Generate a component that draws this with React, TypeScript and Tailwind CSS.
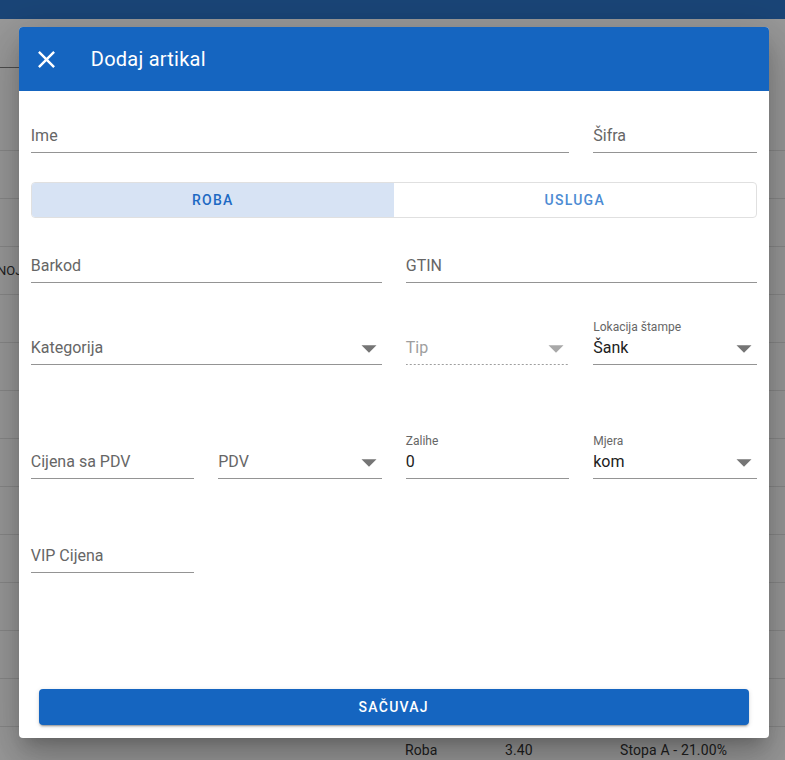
import { ReactNode } from "react";

function Arrow({ disabled = false }: { disabled?: boolean }) {
  return (
    <svg width="16" height="8" viewBox="0 0 16 8" className={disabled ? "fill-[#a8a8a8]" : "fill-[#757575]"} aria-hidden="true">
      <path d="M0.5 0.2H15.5L8 7.8Z" />
    </svg>
  );
}

interface FieldProps {
  label: string;
  value?: string;
  select?: boolean;
  disabled?: boolean;
  className?: string;
}

function Field({ label, value, select = false, disabled = false, className = "" }: FieldProps) {
  // disabled underline is a 2px on / 2px off dash, a dashed border comes out too sparse
  const line = disabled
    ? "bg-[linear-gradient(to_right,#9e9e9e_2px,transparent_2px)] bg-[length:4px_1px] bg-bottom bg-repeat-x"
    : "border-b border-[#949494]";
  return (
    <div className={`relative ${className}`}>
      {value && (
        <div className="absolute left-0 -top-[12px] text-[12px] leading-[16px] text-[#666666]">{label}</div>
      )}
      <div className={`flex h-[34px] items-center justify-between text-[16px] ${line}`}>
        {value ? (
          <span className="text-[#212121]">{value}</span>
        ) : (
          <span className={disabled ? "text-[#9e9e9e]" : "text-[#666666]"}>{label}</span>
        )}
        {select && (
          <span className="mr-[5px] mt-[2px] flex">
            <Arrow disabled={disabled} />
          </span>
        )}
      </div>
    </div>
  );
}

function Row({ children }: { children?: ReactNode }) {
  return <div className="h-12 border-b border-[#e0e0e0] text-[14px] tracking-[0.125px] text-[#212121]">{children}</div>;
}

export default function App() {
  return (
    <div className="relative h-[760px] overflow-hidden bg-white font-['Roboto',sans-serif]">
      {/* Page behind the dialog */}
      <div className="h-[19px] bg-[#1565c0]" />
      <div className="h-[49px] w-[300px] border-b border-[#757575]" />
      <div className="h-[35px]" />
      <div className="h-[48px] border-b border-[#e0e0e0]" />
      <Row />
      <Row />
      <Row>
        <div className="-ml-[3px] flex h-full items-center text-[13px] tracking-normal">NOJ</div>
      </Row>
      <Row />
      <Row />
      <Row />
      <Row />
      <Row />
      <Row />
      <Row />
      <Row />
      <Row />
      <Row>
        <div className="flex h-full items-center pl-[405px]">
          <span className="w-[100px]">Roba</span>
          <span className="w-[115px]">3.40</span>
          <span>Stopa A - 21.00%</span>
        </div>
      </Row>

      <div className="absolute inset-0 bg-[#212121]/46" />

      {/* Dialog */}
      <div className="absolute left-[18.75px] top-[27px] flex h-[711px] w-[750px] flex-col overflow-hidden rounded-[4px] bg-white shadow-[0_11px_15px_-7px_rgba(0,0,0,0.2),0_24px_38px_3px_rgba(0,0,0,0.14),0_9px_46px_8px_rgba(0,0,0,0.12)]">
        <header className="flex h-[64px] shrink-0 items-center bg-[#1565c0] text-white">
          <svg width="29" height="29" viewBox="0 0 24 24" fill="currentColor" className="ml-[13px]" aria-hidden="true">
            <path d="M19,6.41L17.59,5L12,10.59L6.41,5L5,6.41L10.59,12L5,17.59L6.41,19L12,13.41L17.59,19L19,17.59L13.41,12L19,6.41Z" />
          </svg>
          <h1 className="ml-[30px] text-[20px] tracking-[0.25px]">Dodaj artikal</h1>
        </header>

        <div className="flex flex-1 flex-col px-3 pt-[28px]">
          <div className="grid grid-cols-4 gap-x-6">
            <Field label="Ime" className="col-span-3" />
            <Field label="Šifra" />
          </div>

          <div className="mt-[29px] flex h-[36px] overflow-hidden rounded-[4px] border border-[#e0e0e0] text-[14px] font-medium tracking-[1.25px]">
            <div className="flex flex-1 items-center justify-center bg-[#d7e3f4] text-[#1d69c3]">ROBA</div>
            <div className="flex flex-1 items-center justify-center text-[#4c8bd3]">USLUGA</div>
          </div>

          <div className="mt-[31px] grid grid-cols-4 gap-x-6">
            <Field label="Barkod" className="col-span-2" />
            <Field label="GTIN" className="col-span-2" />
          </div>

          <div className="mt-[48px] grid grid-cols-4 gap-x-6">
            <Field label="Kategorija" select className="col-span-2" />
            <Field label="Tip" select disabled />
            <Field label="Lokacija štampe" value="Šank" select />
          </div>

          <div className="mt-[80px] grid grid-cols-4 gap-x-6">
            <Field label="Cijena sa PDV" />
            <Field label="PDV" select />
            <Field label="Zalihe" value="0" />
            <Field label="Mjera" value="kom" select />
          </div>

          <div className="mt-[60px] grid grid-cols-4 gap-x-6">
            <Field label="VIP Cijena" />
          </div>

          <button className="mx-2 mb-[13px] mt-auto h-[36px] shrink-0 rounded-[4px] bg-[#1565c0] text-[14px] font-medium tracking-[1.25px] text-white shadow-[0_3px_1px_-2px_rgba(0,0,0,0.2),0_2px_2px_0_rgba(0,0,0,0.14),0_1px_5px_0_rgba(0,0,0,0.12)]">
            SAČUVAJ
          </button>
        </div>
      </div>
    </div>
  );
}
